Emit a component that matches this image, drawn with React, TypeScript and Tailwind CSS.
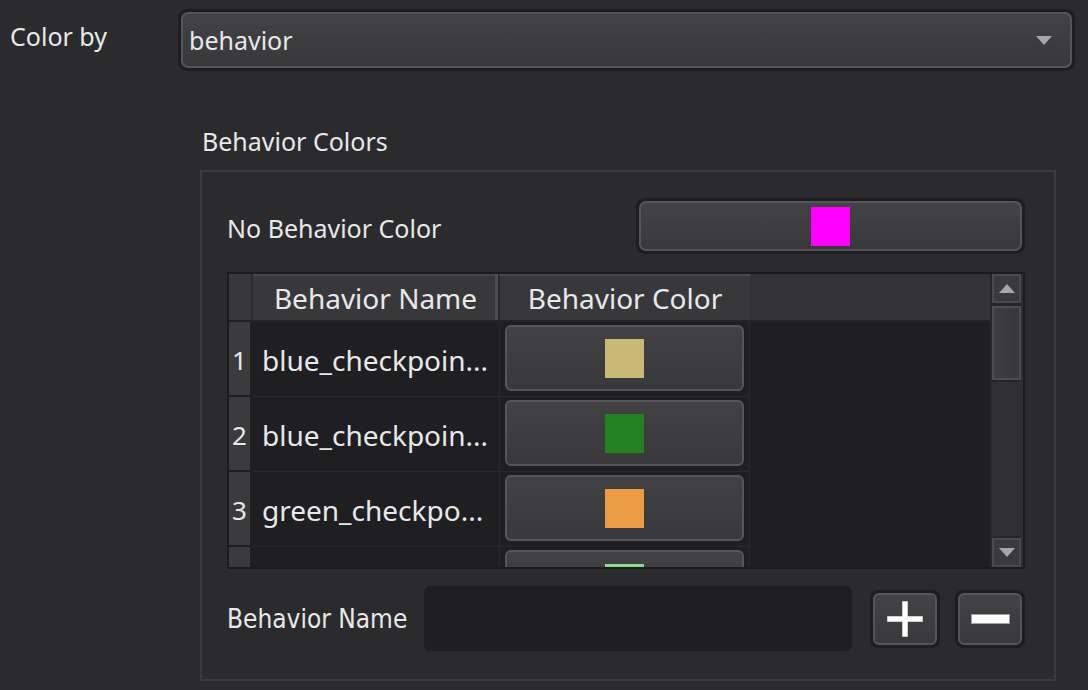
import React from 'react';

const rows = [
  { n: '1', name: 'blue_checkpoin...', color: '#cab876' },
  { n: '2', name: 'blue_checkpoin...', color: '#238023' },
  { n: '3', name: 'green_checkpo...', color: '#ec9c45' },
  { n: '', name: '', color: '#8fd88f' },
];

function ColorButton({ color }: { color: string }) {
  return (
    <div className="flex h-full w-full items-center justify-center rounded-[6px] border-2 border-[#565658] bg-gradient-to-b from-[#424245] to-[#39393b]">
      <div className="h-[39px] w-[39px]" style={{ backgroundColor: color }} />
    </div>
  );
}

function Arrow({ up }: { up?: boolean }) {
  return (
    <svg width="16" height="9" viewBox="0 0 16 9">
      <polygon points={up ? '8,0 16,9 0,9' : '0,0 16,0 8,9'} fill="#a6a6a8" />
    </svg>
  );
}

export default function App() {
  return (
    <div
      className="h-[690px] w-[1088px] overflow-hidden bg-[#2b2b2d] text-[#e8e8ea]"
      style={{ fontFamily: '"Noto Sans", "Open Sans", sans-serif' }}
    >
      {/* Color by */}
      <div className="flex pt-[9px] pr-[13px]">
        <div className="w-[178px] pl-[10px] pt-[12px] text-[25px] leading-[30px]">Color by</div>
        <div className="flex h-[62px] flex-1 rounded-[9px] bg-[#1e1e20] p-[3px]">
          <div className="flex flex-1 items-center justify-between rounded-[7px] border-2 border-[#555557] bg-gradient-to-b from-[#434346] to-[#38383a] pl-[6px] pr-[18px]">
            <span className="text-[25px] leading-[30px]">behavior</span>
            <Arrow />
          </div>
        </div>
      </div>

      {/* Behavior Colors */}
      <div className="ml-[202px] mt-[55px] text-[25px] leading-[30px]">Behavior Colors</div>

      <div className="ml-[200px] mt-[14px] h-[511px] w-[856px] border-2 border-[#3b3b3d]">
        {/* No behavior color */}
        <div className="mt-[26px] flex items-center pl-[25px] pr-[29px]">
          <div className="w-[409px] pt-[4px] text-[25px] leading-[30px]">No Behavior Color</div>
          <div className="flex h-[56px] flex-1 rounded-[9px] bg-[#1e1e20] p-[3px]">
            <div className="flex flex-1 items-center justify-center rounded-[7px] border-2 border-[#555557] bg-gradient-to-b from-[#434346] to-[#39393b]">
              <div className="h-[39px] w-[39px] bg-[#ff00ff]" />
            </div>
          </div>
        </div>

        {/* Table */}
        <div className="ml-[25px] mt-[18px] flex h-[297px] w-[798px] border-2 border-[#1c1c1e] bg-[#1f1f21]">
          <div className="flex flex-1 flex-col overflow-hidden">
            <div className="flex h-[48px] shrink-0 border-b-2 border-[#232325] bg-[#333336]">
              <div className="w-[24px] border-r-2 border-[#2b2b2d] bg-[#38383a]" />
              <div className="flex w-[245px] items-center justify-center border-t-2 border-r-[3px] border-t-[#48484a] border-r-[#4d4d50] bg-[#38383a] pl-[3px] text-[28px]">
                Behavior Name
              </div>
              <div className="flex w-[252px] items-center justify-center border-t-2 border-l-2 border-t-[#48484a] border-l-[#2b2b2d] bg-[#38383a] text-[28px]">
                Behavior Color
              </div>
            </div>
            {rows.map((r, i) => (
              <div key={i} className="flex h-[75px] shrink-0">
                <div className="mb-[2px] flex w-[21px] items-center justify-center bg-[#3b3b3d] pt-[4px] text-[26px]">
                  {r.n}
                </div>
                <div className="w-[3px] bg-[#1f1f21]" />
                <div className="flex w-[247px] items-center border-b border-r border-[#29292b] pl-[9px] pt-[2px] text-[28px]">
                  {r.name}
                </div>
                <div className="w-[250px] border-b border-r border-[#29292b] px-[5px] pt-[3px] pb-[5px]">
                  <ColorButton color={r.color} />
                </div>
              </div>
            ))}
          </div>
          {/* Scrollbar */}
          <div className="flex w-[33px] flex-col border-l-2 border-[#262628] bg-[#303032] pr-[2px]">
            <div className="flex h-[29px] items-center justify-center border-2 border-[#4a4a4c] bg-[#3a3a3c]">
              <Arrow up />
            </div>
            <div className="h-[3px] bg-[#262628]" />
            <div className="h-[74px] border-2 border-[#4d4d4f] bg-gradient-to-r from-[#3e3e40] to-[#38383a]" />
            <div className="h-[2px] bg-[#262628]" />
            <div className="flex-1" />
            <div className="h-[2px] bg-[#262628]" />
            <div className="flex h-[29px] items-center justify-center border-2 border-[#4a4a4c] bg-[#3a3a3c]">
              <Arrow />
            </div>
          </div>
        </div>

        {/* Bottom row */}
        <div className="mt-[17px] flex items-center pl-[25px] pr-[29px]">
          <div
            className="w-[197px] text-[26px] leading-[30px]"
            style={{ fontStretch: 'condensed', fontFamily: '"DejaVu Sans", sans-serif' }}
          >
            Behavior Name
          </div>
          <div className="h-[65px] w-[428px] rounded-[6px] bg-[#1f1f21]" />
          <div className="ml-[18px] flex h-[58px] w-[70px] rounded-[8px] bg-[#1e1e20] p-[3px]">
            <div className="flex flex-1 items-center justify-center rounded-[6px] border-2 border-[#555557] bg-gradient-to-b from-[#434346] to-[#39393b]">
              <svg width="36" height="36" viewBox="0 0 36 36">
                <rect x="15" y="0" width="6" height="36" fill="#9a9a9a" />
                <rect x="0" y="15" width="36" height="6" fill="#9a9a9a" />
                <rect x="15.5" y="0.5" width="5" height="35" fill="#ffffff" />
                <rect x="0.5" y="15.5" width="35" height="5" fill="#ffffff" />
              </svg>
            </div>
          </div>
          <div className="ml-[15px] flex h-[58px] w-[70px] rounded-[8px] bg-[#1e1e20] p-[3px]">
            <div className="flex flex-1 items-center justify-center rounded-[6px] border-2 border-[#555557] bg-gradient-to-b from-[#434346] to-[#39393b]">
              <svg width="39" height="10" viewBox="0 0 39 10">
                <rect x="0" y="0" width="39" height="10" fill="#a0a0a0" />
                <rect x="1" y="1" width="37" height="8" fill="#ffffff" />
              </svg>
            </div>
          </div>
        </div>
      </div>
    </div>
  );
}
